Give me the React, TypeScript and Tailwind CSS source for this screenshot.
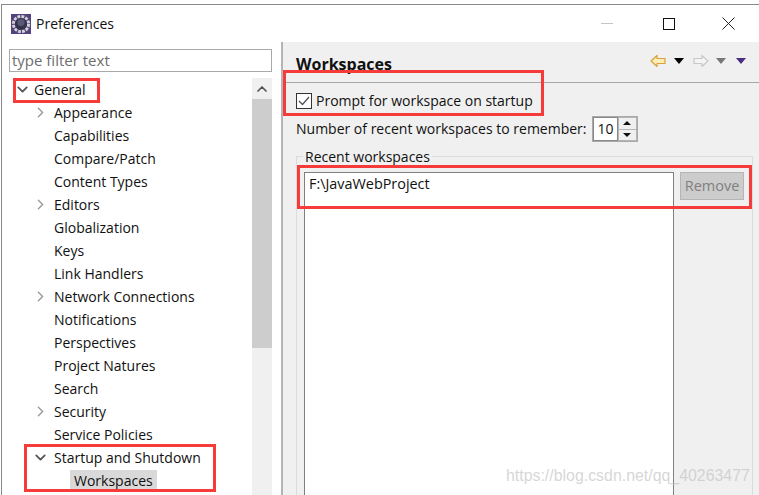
import { ChevronDown, ChevronRight, ChevronUp } from "lucide-react";

const rows = [
  { label: "Appearance", arrow: true },
  { label: "Capabilities" },
  { label: "Compare/Patch" },
  { label: "Content Types" },
  { label: "Editors", arrow: true },
  { label: "Globalization" },
  { label: "Keys" },
  { label: "Link Handlers" },
  { label: "Network Connections", arrow: true },
  { label: "Notifications" },
  { label: "Perspectives" },
  { label: "Project Natures" },
  { label: "Search" },
  { label: "Security", arrow: true },
  { label: "Service Policies" },
];

function AppIcon() {
  return (
    <svg width="20" height="20" viewBox="0 0 20 20" className="shrink-0">
      <rect width="20" height="20" fill="#54427f" />
      <circle cx="10" cy="10" r="7.6" fill="none" stroke="#d4d4d4" strokeWidth="3" strokeDasharray="2.8 1.2" />
      <circle cx="10" cy="10" r="6" fill="#34344c" />
      <circle cx="10" cy="8.5" r="3.5" fill="#5a5a78" />
    </svg>
  );
}

function ArrowIcon({ dir, active }: { dir: "left" | "right"; active: boolean }) {
  return (
    <svg width="16" height="14" viewBox="0 0 16 14" className={dir === "right" ? "-scale-x-100" : ""}>
      <path
        d="M1 7 L7 1.5 V4.5 H15 V9.5 H7 V12.5 Z"
        fill={active ? "#fdeeb8" : "#f4f4f4"}
        stroke={active ? "#d9a13a" : "#c8c8c8"}
        strokeWidth="1.2"
        strokeLinejoin="round"
      />
    </svg>
  );
}

function Tri({ color, small }: { color: string; small?: boolean }) {
  return (
    <svg width={small ? 8 : 10} height={small ? 4 : 6} viewBox="0 0 10 6" preserveAspectRatio="none">
      <path d="M0 0 H10 L5 6 Z" fill={color} />
    </svg>
  );
}

function TreeRow({ label, arrow }: { label: string; arrow?: boolean }) {
  return (
    <div className="flex h-[23px] items-center">
      <div className="flex w-[45px] shrink-0 justify-end pr-[5px]">
        {arrow && <ChevronRight size={17} strokeWidth={2} className="text-[#9a9a9a]" />}
      </div>
      <span>{label}</span>
    </div>
  );
}

export default function App() {
  return (
    <div
      className="relative h-[495px] w-[759px] overflow-hidden bg-white pl-[1px] pt-[4px] text-[14px] leading-none text-[#111] [font-family:'Open_Sans','Noto_Sans',sans-serif]"
    >
      <div className="flex h-[491px] flex-col border-l border-t border-[#8a8a8a]">
        {/* Title bar */}
        <div className="flex h-[37px] shrink-0 items-center">
          <div className="ml-[9px] mr-[5px] mt-[1px]">
            <AppIcon />
          </div>
          <span className="mt-[1px]">Preferences</span>
          <div className="ml-auto flex items-center">
            <div className="mr-[50px] h-[1px] w-[12px] bg-[#c4c4c4]" />
            <div className="mr-[47px] h-[12px] w-[12px] border border-[#111]" />
            <svg width="13" height="13" viewBox="0 0 13 13" className="mr-[24px]">
              <path d="M0.5 0.5 L12.5 12.5 M12.5 0.5 L0.5 12.5" stroke="#222" strokeWidth="1" />
            </svg>
          </div>
        </div>

        <div className="flex min-h-0 flex-1">
          {/* Left tree */}
          <div className="flex w-[279px] shrink-0 flex-col pl-[7px] pr-[9px] pt-[7px]">
            <div className="flex h-[23px] items-center border border-[#a9a9a9] pl-[2px] text-[15px] text-[#6d6d6d]">
              type filter text
            </div>
            <div className="flex min-h-0 flex-1 pt-[6px]">
              <div className="min-w-0 flex-1">
                <div className="flex h-[23px] items-center">
                  <ChevronDown size={17} strokeWidth={2.5} className="ml-[5px] mr-[3px] text-[#555]" />
                  <span>General</span>
                </div>
                {rows.map((r) => (
                  <TreeRow key={r.label} label={r.label} arrow={r.arrow} />
                ))}
                <div className="flex h-[23px] items-center">
                  <div className="flex w-[45px] shrink-0 justify-end pr-[5px]">
                    <ChevronDown size={17} strokeWidth={2.5} className="text-[#555]" />
                  </div>
                  <span>Startup and Shutdown</span>
                </div>
                <div className="flex h-[23px] items-center pl-[61px]">
                  <span className="flex h-[22px] items-center bg-[#d9d9d9] px-[4px]">Workspaces</span>
                </div>
              </div>
              {/* Scrollbar */}
              <div className="flex w-[20px] shrink-0 flex-col bg-[#f0f0f0]">
                <div className="flex h-[21px] items-center justify-center">
                  <ChevronUp size={16} strokeWidth={2.5} className="text-[#505050]" />
                </div>
                <div className="h-[249px] bg-[#cdcdcd]" />
              </div>
            </div>
          </div>

          {/* Right pane */}
          <div className="flex min-w-0 flex-1 flex-col border-l-2 border-[#b4b4b4] bg-[#f0f0f0]">
            <div className="flex h-[41px] shrink-0 items-center border-b border-[#a8a8a8] pl-[13px] pr-[13px]">
              <span className="mt-[4px] text-[16px] font-bold">Workspaces</span>
              <div className="-mt-[2px] ml-auto flex items-center">
                <ArrowIcon dir="left" active />
                <div className="ml-[8px] mr-[9px]">
                  <Tri color="#000" />
                </div>
                <ArrowIcon dir="right" active={false} />
                <div className="ml-[7px] mr-[10px]">
                  <Tri color="#777" />
                </div>
                <Tri color="#4a2d80" />
              </div>
            </div>

            <div className="flex min-h-0 flex-1 flex-col pl-[13px] pr-[6px]">
              <div className="mt-[9px] flex h-[17px] items-center">
                <div className="mr-[4px] flex h-[16px] w-[16px] items-center justify-center border border-[#333] bg-white">
                  <svg width="12" height="10" viewBox="0 0 12 10">
                    <path d="M1 5 L4.5 8.5 L11 1" fill="none" stroke="#555" strokeWidth="1.4" />
                  </svg>
                </div>
                <span>Prompt for workspace on startup</span>
              </div>

              <div className="mt-[7px] flex h-[26px] items-center">
                <span>Number of recent workspaces to remember:</span>
                <div className="ml-[5px] flex h-[26px] w-[46px] border border-[#a9a9a9] bg-white">
                  <div className="flex w-[25px] items-center border border-[#888] pl-[4px]">10</div>
                  <div className="flex flex-1 flex-col bg-[#f0f0f0]">
                    <div className="flex flex-1 items-center justify-center border border-[#b5b5b5] bg-[#f0f0f0]">
                      <div className="flex -scale-y-100">
                        <Tri color="#111" small />
                      </div>
                    </div>
                    <div className="flex flex-1 items-center justify-center border border-t-0 border-[#b5b5b5]">
                      <Tri color="#111" small />
                    </div>
                  </div>
                </div>
              </div>

              <div className="relative mt-[14px] min-h-0 flex-1 border border-b-0 border-[#dcdcdc] pl-[7px] pt-[15px]">
                <span className="absolute -top-[7px] left-[6px] bg-[#f0f0f0] px-[2px]">Recent workspaces</span>
                <div className="flex h-full items-start">
                  <div className="h-full w-[370px] shrink-0 border border-b-0 border-[#808080] bg-white pl-[4px] pt-[4px] text-[14.4px]">
                    F:\JavaWebProject
                  </div>
                  <div className="ml-[6px] flex h-[28px] w-[64px] items-center justify-center border border-[#b5b5b5] bg-[#cccccc] pt-[1px] text-[14.5px] text-[#808080]">
                    Remove
                  </div>
                </div>
              </div>
            </div>
          </div>
        </div>
      </div>

      {/* Red annotation boxes */}
      <div className="absolute left-[13px] top-[78px] h-[25px] w-[87px] border-[3px] border-[#f73b3b]" />
      <div className="absolute left-[283px] top-[70px] h-[46px] w-[261px] border-[3px] border-[#f73b3b]" />
      <div className="absolute left-[297px] top-[165px] h-[44px] w-[455px] border-[3px] border-[#f73b3b]" />
      <div className="absolute left-[24px] top-[444px] h-[48px] w-[192px] border-[3px] border-[#f73b3b]" />

      {/* Watermark */}
      <span className="absolute left-[506px] top-[468px] text-[15.9px] text-[#c4c4c4]/70 [font-family:'Liberation_Sans',sans-serif]">
        https://blog.csdn.net/qq_40263477
      </span>
    </div>
  );
}
